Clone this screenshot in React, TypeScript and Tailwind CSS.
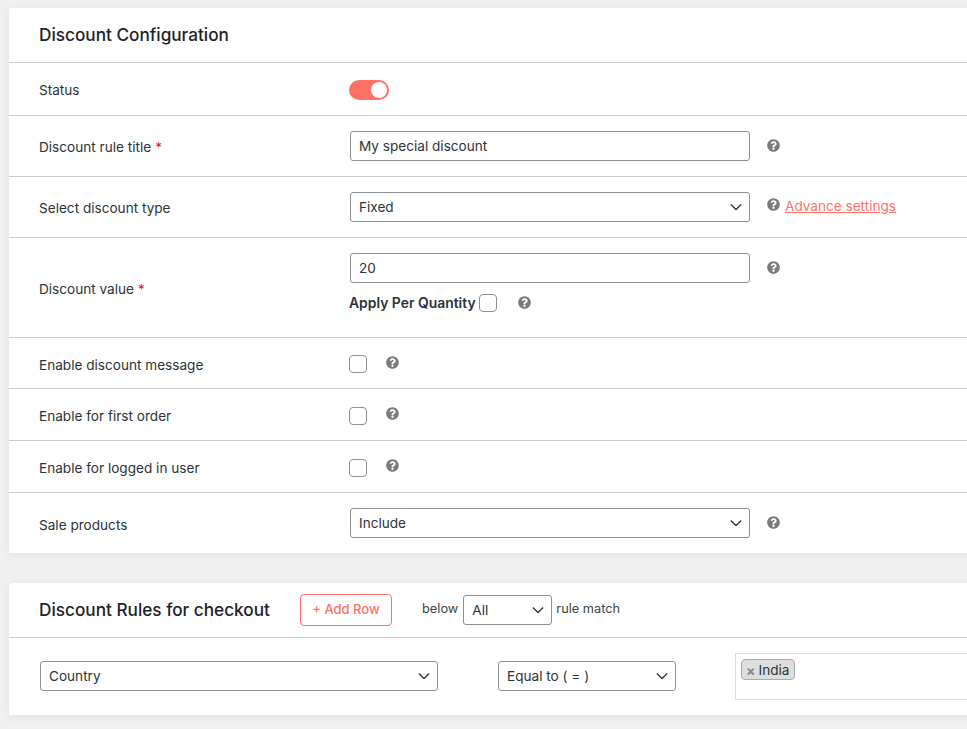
import type { ReactNode } from 'react';
import { FaQuestionCircle } from 'react-icons/fa';

function Help({ className = '' }: { className?: string }) {
  return <FaQuestionCircle className={`h-[13px] w-[13px] shrink-0 text-[#7b7b7b] ${className}`} />;
}

function Chevron() {
  return (
    <svg
      viewBox="0 0 14 8"
      className="pointer-events-none absolute top-1/2 right-[8px] h-[7px] w-[12px] -translate-y-1/2 text-[#2c3338]"
      fill="none"
      stroke="currentColor"
      strokeWidth="1.5"
    >
      <path d="M1 1l6 6 6-6" />
    </svg>
  );
}

function Select({ value, className }: { value: string; className: string }) {
  return (
    <div className={`relative h-[30px] shrink-0 ${className}`}>
      <select
        defaultValue={value}
        className="h-[30px] w-full appearance-none rounded-[3px] border border-[#8c8f94] bg-white pt-[2px] pr-6 pl-2 text-[13.6px] leading-none text-[#2c3338]"
      >
        <option>{value}</option>
      </select>
      <Chevron />
    </div>
  );
}

function TextInput({ value }: { value: string }) {
  return (
    <input
      readOnly
      value={value}
      className="h-[30px] w-[400px] shrink-0 rounded-[3px] border border-[#8c8f94] bg-white px-2 text-[13.6px] text-[#2c3338]"
    />
  );
}

function Checkbox({ className = '' }: { className?: string }) {
  return (
    <input
      type="checkbox"
      className={`h-[18px] w-[18px] shrink-0 appearance-none rounded-[4px] border border-[#8c8f94] bg-white ${className}`}
    />
  );
}

function Row({
  label,
  required,
  className,
  labelClass = 'pt-[2px]',
  children,
}: {
  label: string;
  required?: boolean;
  className: string;
  labelClass?: string;
  children: ReactNode;
}) {
  return (
    <div className={`flex items-center border-b border-[#c9cbcd] pl-[30px] ${className}`}>
      <div className={`w-[311px] shrink-0 text-[13.6px] text-[#2c3338] ${labelClass}`}>
        {label}
        {required && <span className="ml-1 text-[#e2202c]">*</span>}
      </div>
      {children}
    </div>
  );
}

function CheckRow({ label, className }: { label: string; className: string }) {
  return (
    <Row label={label} className={className} labelClass="pt-[4px]">
      <Checkbox className="-ml-[1px] mt-[2px]" />
      <Help className="ml-[19px] -mt-[2px]" />
    </Row>
  );
}

export default function App() {
  return (
    <div className="h-[729px] overflow-hidden bg-[#f0f0f1] pt-2 pl-[9px] font-['Inter',sans-serif] text-[#2c3338]">
      <section className="w-[1000px] rounded-tl-[3px] bg-white shadow-[0_2px_10px_rgba(0,0,0,0.06)]">
        <header className="flex h-[55px] items-center border-b border-[#c9cbcd] pl-[30px]">
          <h2 className="text-[17.2px] font-medium text-[#1d2327]">Discount Configuration</h2>
        </header>

        <Row label="Status" className="h-[53px]">
          <div className="-ml-[1px] flex h-5 w-10 translate-y-[1px] items-center justify-end rounded-full bg-[#ff7066] pr-[2px]">
            <span className="h-4 w-4 rounded-full bg-white" />
          </div>
        </Row>

        <Row label="Discount rule title" required className="h-[61px]">
          <TextInput value="My special discount" />
          <Help className="ml-[17px] -mt-[2px]" />
        </Row>

        <Row label="Select discount type" className="h-[61px]">
          <Select value="Fixed" className="w-[400px]" />
          <Help className="ml-[17px] -mt-[5px]" />
          <a href="#" className="ml-[5px] -mt-[2px] text-[13.6px] text-[#ff7066] underline">
            Advance settings
          </a>
        </Row>

        <Row label="Discount value" required className="h-[100px]" labelClass="pt-[3px]">
          <div className="-mt-[9px]">
            <div className="flex items-center">
              <TextInput value="20" />
              <Help className="ml-[17px]" />
            </div>
            <div className="mt-[10px] -ml-[1px] flex items-center">
              <span className="text-[13.9px] font-semibold text-[#2c3338]">Apply Per Quantity</span>
              <Checkbox className="ml-[3px]" />
              <Help className="ml-[21px]" />
            </div>
          </div>
        </Row>

        <CheckRow label="Enable discount message" className="h-[51px]" />
        <CheckRow label="Enable for first order" className="h-[52px]" />
        <CheckRow label="Enable for logged in user" className="h-[52px]" />

        <div className="flex h-[60px] items-center pl-[30px]">
          <div className="w-[311px] shrink-0 pt-[4px] text-[13.6px]">Sale products</div>
          <Select value="Include" className="w-[400px]" />
          <Help className="ml-[17px] -mt-[2px]" />
        </div>
      </section>

      <section className="mt-[30px] w-[1000px] rounded-tl-[3px] bg-white shadow-[0_2px_10px_rgba(0,0,0,0.06)]">
        <header className="flex h-[55px] items-center border-b border-[#c9cbcd] pl-[30px]">
          <h2 className="w-[261px] shrink-0 text-[17.2px] font-medium text-[#1d2327]">
            Discount Rules for checkout
          </h2>
          <button className="h-8 w-[92px] shrink-0 rounded-[4px] border border-[#ff7066] bg-white text-[13px] font-medium text-[#ff7066]">
            + Add Row
          </button>
          <span className="ml-[30px] -mt-[2px] text-[12.8px] text-[#3c434a]">below</span>
          <Select value="All" className="ml-[5px] w-[89px]" />
          <span className="ml-[4px] -mt-[2px] text-[12.8px] text-[#3c434a]">rule match</span>
        </header>

        <div className="flex h-[77px] items-start pl-[31px]">
          <Select value="Country" className="mt-[23px] w-[398px]" />
          <Select value="Equal to ( = )" className="mt-[23px] ml-[60px] w-[178px]" />
          <div className="mt-[15px] ml-[59px] flex h-[47px] flex-1 items-start border border-[#ddd] bg-white pt-[5px] pl-[5px]">
            <span className="flex h-[21px] items-center rounded-[4px] border border-[#aaa] bg-[#dedede] pt-[1px] pr-[5px] pl-1 text-[13.6px] text-[#2c3338]">
              <span className="mr-[3px] text-[14px] font-bold text-[#888]">×</span>India
            </span>
          </div>
        </div>
      </section>
    </div>
  );
}
